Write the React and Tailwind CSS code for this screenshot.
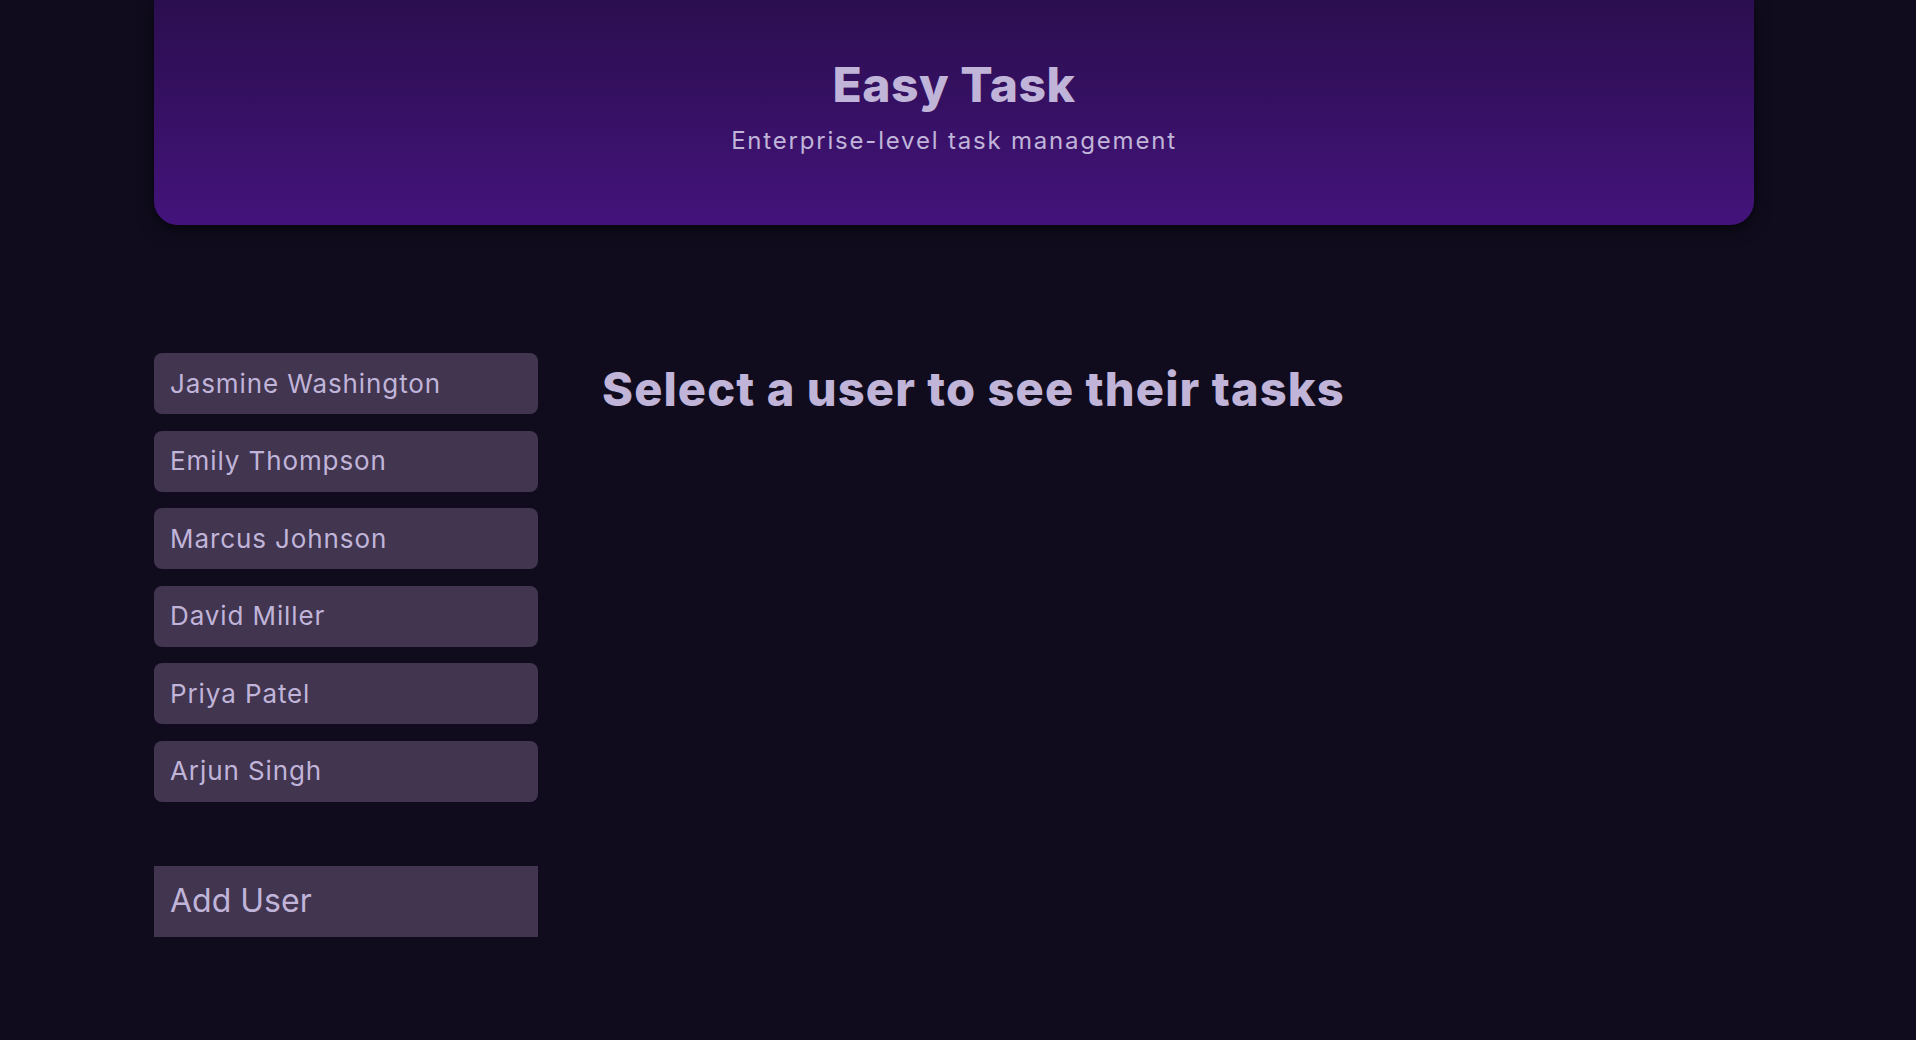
const users = [
  'Jasmine Washington',
  'Emily Thompson',
  'Marcus Johnson',
  'David Miller',
  'Priya Patel',
  'Arjun Singh',
]

export default function App() {
  return (
    <div className="min-h-screen bg-[#100c1e] text-[#c0b4d9] font-['Inter',sans-serif] overflow-hidden">
      {/* Header */}
      <header className="ml-[154px] w-[1600px] h-[225px] pt-[61px] rounded-b-3xl bg-gradient-to-b from-[#2b0e4f] to-[#43137b] shadow-[0_4px_16px_rgba(0,0,0,0.6)] flex flex-col items-center">
        <h1 className="text-[48px] leading-none font-extrabold tracking-[0.5px]">Easy Task</h1>
        <p className="mt-4 text-[24px] leading-8 tracking-[1.8px]">Enterprise-level task management</p>
      </header>

      {/* Main */}
      <main className="ml-[154px] mt-32 flex gap-16">
        <div className="w-[384px] flex flex-col">
          <ul className="flex flex-col gap-[16.5px]">
            {users.map((name) => (
              <li key={name}>
                <button className="w-full h-[61px] px-4 rounded-lg bg-[#413550] text-left text-[26px] leading-none tracking-[0.9px]">
                  {name}
                </button>
              </li>
            ))}
          </ul>
          <button className="mt-16 w-full h-[71px] px-4 bg-[#413550] text-left text-[32px] leading-none">
            Add User
          </button>
        </div>

        <div className="flex-1">
          <h2 className="mt-[12px] text-[47px] leading-none font-extrabold tracking-[1.1px]">Select a user to see their tasks</h2>
        </div>
      </main>
    </div>
  )
}
